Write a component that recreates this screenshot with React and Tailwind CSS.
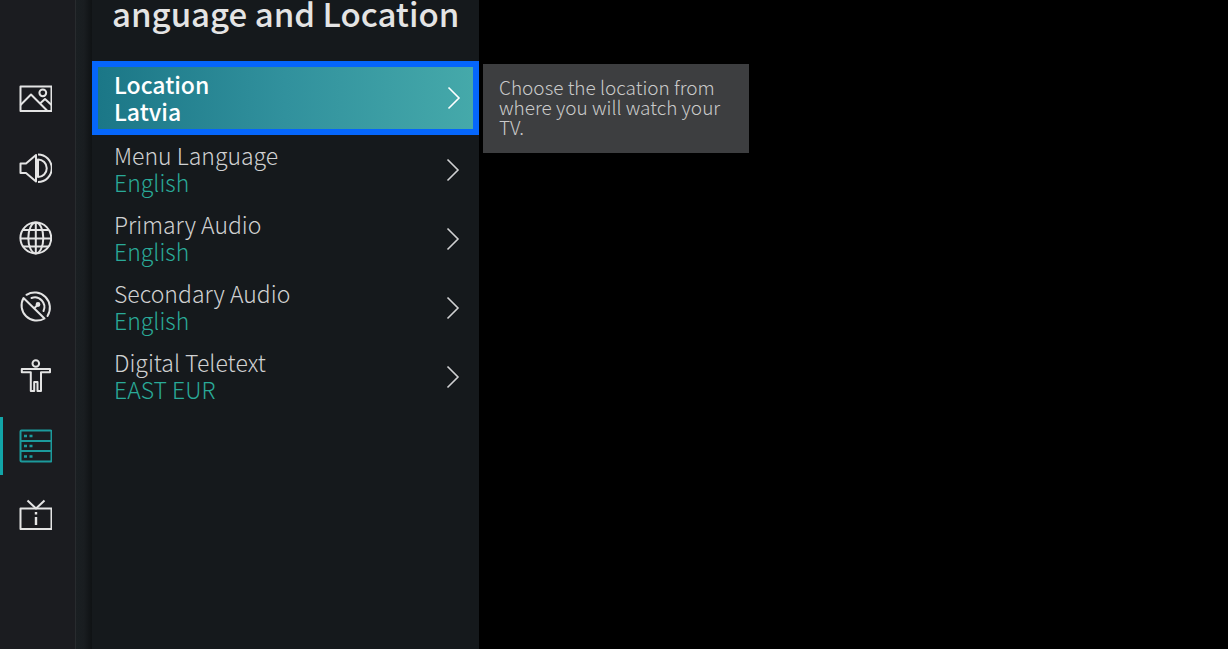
import React, { useState } from "react";

const PictureIcon = () => (
  <svg width="34" height="34" viewBox="0 0 34 34" fill="none" stroke="currentColor" strokeWidth="2" strokeLinejoin="round">
    <rect x="2.5" y="4.5" width="31" height="24.5" />
    <path d="M2.5 23 L13 12.5 L29 28.5" />
    <path d="M22 21.5 L27 17 L33.5 23" />
    <circle cx="24.8" cy="10.8" r="3.4" />
  </svg>
);

const SoundIcon = () => (
  <svg width="34" height="34" viewBox="0 0 34 34" fill="none" stroke="currentColor" strokeWidth="2" strokeLinejoin="round">
    <path d="M2.5 12.5 H8 L18 4 V30.5 L8 22 H2.5 Z" />
    <path d="M20 3.5 A13.5 13.5 0 0 1 20 31" />
    <path d="M20 8.5 A8.5 8.5 0 0 1 20 26 Z" />
  </svg>
);

const NetworkIcon = () => (
  <svg width="34" height="34" viewBox="0 0 34 34" fill="none" stroke="currentColor" strokeWidth="2">
    <circle cx="17.8" cy="17" r="15.4" />
    <ellipse cx="17.8" cy="17" rx="7.5" ry="15.4" />
    <path d="M17.8 2 V32 M2.5 17.5 H33 M5 9 H30.5 M5 25.5 H30.5" />
  </svg>
);

const ChannelsIcon = () => (
  <svg width="34" height="34" viewBox="0 0 34 34" fill="none" stroke="currentColor" strokeWidth="2" strokeLinecap="round">
    <path d="M5.5 8 L26.5 28.5 A15.2 15.2 0 0 1 5.5 8 Z" strokeLinejoin="round" />
    <path d="M8.5 4.8 A15.3 15.3 0 0 1 29.5 26" />
    <path d="M13.5 8 A9.6 9.6 0 0 1 25.5 21" />
    <path d="M16.5 18 L20 14.5" />
    <circle cx="20" cy="14.5" r="1.4" fill="currentColor" />
  </svg>
);

const AccessibilityIcon = () => (
  <svg width="34" height="34" viewBox="0 0 34 34" fill="none" stroke="currentColor" strokeWidth="2" strokeLinejoin="round">
    <circle cx="17.8" cy="4.5" r="3.3" />
    <path d="M3.8 10 H32 V13.2 H23 V32 H19.5 V23 H16.2 V32 H12.8 V13.2 H3.8 Z" />
  </svg>
);

const SystemIcon = () => (
  <svg width="34" height="34" viewBox="0 0 34 34" fill="none" stroke="currentColor" strokeWidth="2">
    <rect x="2.5" y="1.5" width="31" height="31" rx="1" />
    <path d="M2.5 12 H33.5 M2.5 22 H33.5" />
    <path d="M6 7 H9 M11.5 7 H14.5 M6 17 H9 M11.5 17 H14.5 M6 27.5 H9 M11.5 27.5 H14.5" strokeWidth="2.6" />
  </svg>
);

const AboutIcon = () => (
  <svg width="34" height="34" viewBox="0 0 34 34" fill="none" stroke="currentColor" strokeWidth="2" strokeLinejoin="round">
    <rect x="2.5" y="10.5" width="31" height="20.5" />
    <path d="M9.5 2.5 L18 10.5 L26.5 2.5" />
    <path d="M18 19 V27 M18 14 V16.6" strokeWidth="2.4" />
  </svg>
);

const sections = [
  { name: "Picture", icon: PictureIcon },
  { name: "Sound", icon: SoundIcon },
  { name: "Network", icon: NetworkIcon },
  { name: "Channels", icon: ChannelsIcon },
  { name: "Accessibility", icon: AccessibilityIcon },
  { name: "System", icon: SystemIcon },
  { name: "About", icon: AboutIcon },
];

const settings = [
  { label: "Location", value: "Latvia" },
  { label: "Menu Language", value: "English" },
  { label: "Primary Audio", value: "English" },
  { label: "Secondary Audio", value: "English" },
  { label: "Digital Teletext", value: "EAST EUR" },
];

const Chevron = () => (
  <svg width="14" height="24" viewBox="0 0 14 24" fill="none" stroke="currentColor" strokeWidth="1.6" className="shrink-0">
    <path d="M1.5 1.5 L12 12 L1.5 22.5" />
  </svg>
);

const App = () => {
  const [section, setSection] = useState("System");
  const [selected, setSelected] = useState("Location");

  return (
    <div className="flex min-h-screen bg-black font-['Noto_Sans_CJK_SC','Noto_Sans',sans-serif]">
      {/* Section icons */}
      <nav className="flex w-[75px] shrink-0 flex-col bg-[#1b1c20] pt-16">
        <div className="grid h-[486px] grid-rows-7">
          {sections.map(({ name, icon: Icon }) => (
            <button
              key={name}
              type="button"
              aria-label={name}
              onClick={() => setSection(name)}
              className={
                section === name
                  ? "flex items-center text-[#1c9a9c]"
                  : "flex items-center text-[#e4e4e4]"
              }
            >
              <span className={section === name ? "h-[58px] w-[3px] bg-[#12a5a8]" : "w-[3px]"}></span>
              <span className="ml-[15px]">
                <Icon />
              </span>
            </button>
          ))}
        </div>
      </nav>
      <div className="w-[17px] shrink-0 border-l border-[#282b2e] bg-linear-to-r from-[#1a1f22] via-[#191d20] to-[#0f1214]"></div>

      {/* Settings list */}
      <main className="w-[387px] shrink-0 bg-[#15191c]">
        <h1 className="h-[61px] pl-5 text-[33px] leading-[26px] font-medium whitespace-nowrap text-[#e4e4e4]">
          anguage and Location
        </h1>
        <ul>
          {settings.map((item) => (
            <li key={item.label}>
              <button
                type="button"
                onClick={() => setSelected(item.label)}
                className={
                  selected === item.label
                    ? "flex h-[74px] w-full items-center justify-between border-6 border-[#0566fb] bg-linear-to-r from-[#1b7787] via-[#31919d] to-[#45a9aa] pr-3 pl-4 text-left text-white"
                    : "flex h-[69px] w-full items-center justify-between pr-[19px] pl-[22px] text-left text-[#d0d1d2]"
                }
              >
                {selected === item.label ? (
                  <span className="text-[23px] leading-[27px] font-medium">
                    <span className="block">{item.label}</span>
                    <span className="block">{item.value}</span>
                  </span>
                ) : (
                  <span className="pb-px text-[23px] leading-[27px] font-light">
                    <span className="block">{item.label}</span>
                    <span className="block text-[#2aaa98]">{item.value}</span>
                  </span>
                )}
                <Chevron />
              </button>
            </li>
          ))}
        </ul>
      </main>

      {/* Help for the selected row */}
      <aside className="pt-16 pl-1">
        <p className="h-[89px] w-[266px] bg-[#3d3e40] px-4 pt-[13px] text-[19px] leading-[20px] font-light text-[#cacaca]">
          Choose the location from where you will watch your TV.
        </p>
      </aside>
    </div>
  );
};

export default App;
